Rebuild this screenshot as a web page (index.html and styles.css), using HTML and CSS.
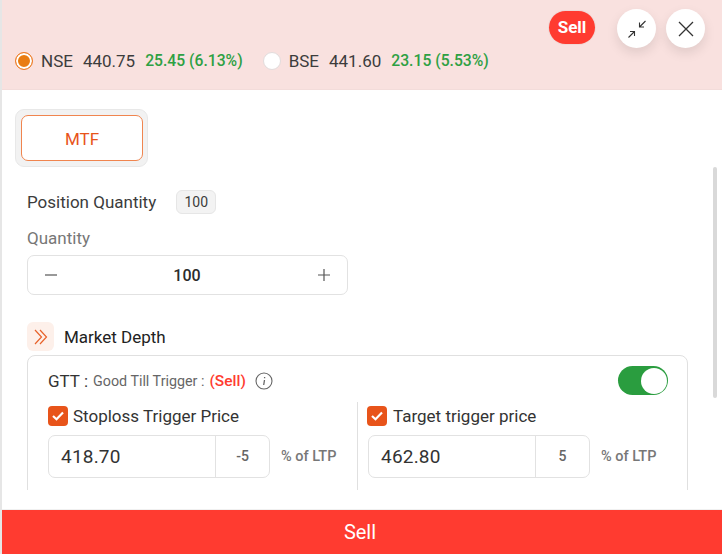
FILE: index.html
```html
<!DOCTYPE html>
<html lang="en">
  <head>
    <meta charset="UTF-8" />
    <meta name="viewport" content="width=device-width, initial-scale=1.0" />
    <title>Sell Order</title>
    <link rel="stylesheet" href="styles.css">
  </head>
  <body>
    <div class="modal">
      <div class="header">
        <div class="header-actions">
          <span class="side-badge">Sell</span>
          <button class="round-btn">
            <svg width="20" height="20" viewBox="0 0 20 20" fill="none" stroke="#333" stroke-width="1.1">
              <path d="M18.500 2 12.500 8M12.500 3.500V8H17" />
              <path d="M1.500 18.500 7.500 12.500M3 12.500H7.500V17" />
            </svg>
          </button>
          <button class="round-btn">
            <svg width="16" height="16" viewBox="0 0 16 16" fill="none" stroke="#333" stroke-width="1.3">
              <path d="M1 1 15 15M15 1 1 15" />
            </svg>
          </button>
        </div>
        <div class="exchanges">
          <div class="exchange">
            <span class="radio radio-on"></span>
            <span class="ex-name">NSE</span>
            <span class="ex-price">440.75</span>
            <span class="ex-change">25.45 (6.13%)</span>
          </div>
          <div class="exchange">
            <span class="radio"></span>
            <span class="ex-name">BSE</span>
            <span class="ex-price">441.60</span>
            <span class="ex-change">23.15 (5.53%)</span>
          </div>
        </div>
      </div>

      <div class="content">
        <div class="tab-wrap">
          <div class="tab">MTF</div>
        </div>

        <div class="position-row">
          <span>Position Quantity</span>
          <span class="qty-badge">100</span>
        </div>

        <div class="field-label">Quantity</div>
        <div class="stepper">
          <svg width="14" height="14" viewBox="0 0 14 14" stroke="#555" stroke-width="1.2"><path d="M1 7H13" /></svg>
          <span class="stepper-value">100</span>
          <svg width="14" height="14" viewBox="0 0 14 14" stroke="#555" stroke-width="1.2"><path d="M1 7H13M7 1V13" /></svg>
        </div>

        <div class="depth-row">
          <span class="depth-icon">
            <svg width="14" height="16" viewBox="0 0 14 16" fill="none" stroke="#e8622a" stroke-width="1.2">
              <path d="M1 1 7.500 8 1 15M6 1 12.500 8 6 15" />
            </svg>
          </span>
          <span>Market Depth</span>
        </div>

        <div class="gtt-card">
          <div class="gtt-head">
            <div class="gtt-title">
              <span class="gtt-name">GTT :</span>
              <span class="gtt-sub">Good Till Trigger :</span>
              <span class="gtt-side">(Sell)</span>
              <svg class="info" width="18" height="18" viewBox="0 0 18 18" fill="none" stroke="#666" stroke-width="1.1">
                <circle cx="9" cy="9" r="8" />
                <path d="M9.500 8 8.700 13M9.600 5V6.200" stroke-width="1.300" />
              </svg>
            </div>
            <div class="toggle"><span class="knob"></span></div>
          </div>

          <div class="triggers">
            <div class="trigger trigger-left">
              <label class="check-label"><span class="check"><svg width="12" height="10" viewBox="0 0 12 10" fill="none" stroke="#fff" stroke-width="2.200"><path d="M1 5 4.500 8.200 11 1.500" /></svg></span>Stoploss Trigger Price</label>
              <div class="price-row">
                <div class="price-box">
                  <span class="price">418.70</span>
                  <span class="pct">-5</span>
                </div>
                <span class="ltp">% of LTP</span>
              </div>
            </div>
            <div class="trigger trigger-right">
              <label class="check-label"><span class="check"><svg width="12" height="10" viewBox="0 0 12 10" fill="none" stroke="#fff" stroke-width="2.200"><path d="M1 5 4.500 8.200 11 1.500" /></svg></span>Target trigger price</label>
              <div class="price-row">
                <div class="price-box">
                  <span class="price">462.80</span>
                  <span class="pct">5</span>
                </div>
                <span class="ltp">% of LTP</span>
              </div>
            </div>
          </div>
        </div>
        <div class="scroll-thumb"></div>
      </div>

      <div class="footer">Sell</div>
    </div>
  </body>
</html>
```

FILE: styles.css
```css
html,
body {
  margin: 0;
  padding: 0;
  background-color: #fff;
}
body {
  font-family: "Roboto", "Liberation Sans", sans-serif;
  color: #333;
  overflow: hidden;
}
.modal {
  width: 720px;
  height: 554px;
  border-left: 2px solid #e6e6e6;
  display: flex;
  flex-direction: column;
}
.header {
  height: 90px;
  box-sizing: border-box;
  background-color: #f9e1df;
  border-bottom: 1px solid #f3dcda;
  padding: 9px 17px 0 13px;
  flex-shrink: 0;
}
.header-actions {
  display: flex;
  justify-content: flex-end;
  align-items: center;
  height: 39px;
}
.side-badge {
  background-color: #ff3b30;
  color: #fff;
  font-size: 17px;
  font-weight: 700;
  width: 46px;
  height: 33px;
  line-height: 33px;
  text-align: center;
  border-radius: 17px;
  box-shadow: 0 0 0 1px #f0d8d6;
  margin-right: 22px;
  margin-top: -2px;
}
.round-btn {
  width: 39px;
  height: 39px;
  border: none;
  border-radius: 50%;
  background-color: #fff;
  box-shadow: 0 5px 12px rgba(0, 0, 0, 0.1);
  padding: 0;
  margin-left: 10px;
  display: flex;
  align-items: center;
  justify-content: center;
}
.round-btn:first-of-type {
  margin-left: 0;
}
.exchanges {
  display: flex;
  gap: 20px;
  margin-top: 3px;
  font-size: 17px;
  line-height: 20px;
}
.exchange {
  display: flex;
  align-items: center;
}
.radio {
  width: 18px;
  height: 18px;
  box-sizing: border-box;
  border-radius: 50%;
  background-color: #fff;
  border: 1px solid #e2dcdc;
  margin-right: 8px;
}
.radio-on {
  background-color: #e97c12;
  border: 1px solid #ee7d2a;
  box-shadow: inset 0 0 0 2px #fff;
}
.ex-name {
  color: #3c3c3c;
  margin-right: 10px;
}
.ex-price {
  color: #3c3c3c;
  margin-right: 10px;
}
.ex-change {
  color: #2ea043;
  font-size: 15.7px;
  font-weight: 500;
}
.content {
  position: relative;
  height: 400px;
  overflow: hidden;
  background-color: #fff;
  flex-shrink: 0;
  padding-left: 25px;
  box-sizing: border-box;
}
.tab-wrap {
  width: 133px;
  height: 58px;
  box-sizing: border-box;
  margin: 19px 0 0 -12px;
  padding: 5px 4px 5px 5px;
  background-color: #f2f2f2;
  border: 1px solid #e8e8e8;
  border-radius: 9px;
}
.tab {
  height: 46px;
  box-sizing: border-box;
  background-color: #fff;
  border: 1px solid #f0854f;
  border-radius: 7px;
  color: #e8541a;
  font-size: 17px;
  line-height: 46px;
  text-align: center;
}
.position-row {
  display: flex;
  align-items: center;
  gap: 20px;
  margin-top: 23px;
  height: 24px;
  font-size: 17px;
  color: #3c3c3c;
}
.qty-badge {
  width: 40px;
  height: 24px;
  box-sizing: border-box;
  background-color: #f3f3f3;
  border: 1px solid #e6e6e6;
  border-radius: 6px;
  font-size: 14px;
  line-height: 22px;
  text-align: center;
}
.field-label {
  margin-top: 14px;
  font-size: 17px;
  line-height: 20px;
  color: #777;
}
.stepper {
  width: 321px;
  height: 40px;
  box-sizing: border-box;
  margin-top: 7px;
  border: 1px solid #e2e2e2;
  border-radius: 7px;
  display: flex;
  align-items: center;
  justify-content: space-between;
  padding: 0 16px;
}
.stepper-value {
  font-size: 16px;
  font-weight: 500;
  color: #2c2c2c;
  margin-right: 1px;
}
.depth-row {
  display: flex;
  align-items: center;
  gap: 10px;
  margin-top: 27px;
  font-size: 17px;
  color: #222;
}
.depth-icon {
  width: 27px;
  height: 29px;
  background-color: #fdf0ea;
  border-radius: 6px;
  display: flex;
  align-items: center;
  justify-content: center;
}
.gtt-card {
  width: 661px;
  height: 200px;
  box-sizing: border-box;
  margin-top: 4px;
  border: 1px solid #e0e0e0;
  border-radius: 8px;
  padding: 10px 19px 0 20px;
}
.gtt-head {
  display: flex;
  justify-content: space-between;
  align-items: center;
  height: 29px;
}
.gtt-title {
  display: flex;
  align-items: center;
}
.gtt-name {
  font-size: 17px;
  color: #333;
  margin-right: 5px;
}
.gtt-sub {
  font-size: 14.3px;
  color: #666;
  margin-right: 5px;
}
.gtt-side {
  font-size: 15.500px;
  font-weight: 500;
  color: #ff3b30;
}
.info {
  margin-left: 9px;
}
.toggle {
  width: 50px;
  height: 29px;
  box-sizing: border-box;
  background-color: #2a9d3f;
  border-radius: 15px;
  padding: 1.500px;
  display: flex;
  justify-content: flex-end;
}
.knob {
  width: 26px;
  height: 26px;
  background-color: #fff;
  border-radius: 50%;
}
.triggers {
  display: flex;
  margin-top: 7px;
}
.trigger {
  width: 310px;
  height: 100px;
  box-sizing: border-box;
}
.trigger-left {
  border-right: 1px solid #e0e0e0;
}
.trigger-right {
  padding-left: 9px;
}
.check-label {
  display: flex;
  align-items: center;
  gap: 5px;
  font-size: 17px;
  color: #333;
  height: 20px;
  margin-top: 4px;
}
.trigger-right .check-label {
  gap: 6px;
}
.check {
  width: 20px;
  height: 20px;
  background-color: #e8541a;
  border-radius: 4px;
  display: flex;
  align-items: center;
  justify-content: center;
}
.price-row {
  display: flex;
  align-items: center;
  margin-top: 9px;
}
.price-box {
  width: 222px;
  height: 43px;
  box-sizing: border-box;
  border: 1px solid #e2e2e2;
  border-radius: 7px;
  display: flex;
  align-items: center;
}
.trigger-right .price-box {
  margin-left: 1px;
}
.price {
  flex: 1;
  font-size: 19px;
  color: #333;
  padding-left: 12px;
  letter-spacing: 0.2px;
}
.pct {
  width: 53px;
  height: 100%;
  line-height: 41px;
  text-align: center;
  font-size: 14px;
  font-weight: 500;
  color: #666;
  border-left: 1px solid #e2e2e2;
}
.ltp {
  font-size: 14.500px;
  font-weight: 500;
  color: #777;
  margin-left: 11px;
}
.scroll-thumb {
  position: absolute;
  left: 711px;
  top: 77px;
  width: 4px;
  height: 231px;
  background-color: #d9d9d9;
  border-radius: 2px;
}
.footer {
  height: 45px;
  margin-top: 19px;
  padding-right: 4px;
  background-color: #ff3b30;
  border-top: 1px solid #f0f0f0;
  box-sizing: border-box;
  color: #fff;
  font-size: 20px;
  line-height: 44px;
  text-align: center;
  flex-shrink: 0;
}
```
